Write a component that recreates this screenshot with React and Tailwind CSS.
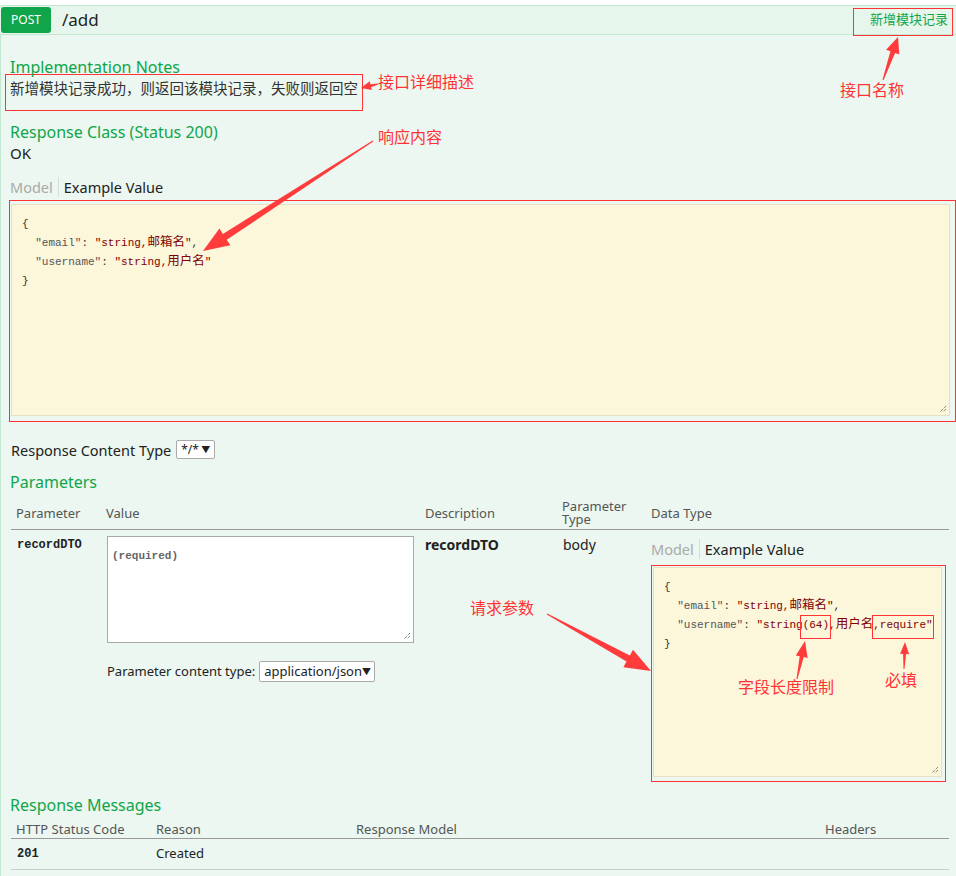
import React from 'react';

// tapered annotation arrow: thin tail, wide head
const arrowPoints = (x1, y1, x2, y2, headLen, headW, neckW, tailW = 1) => {
  const len = Math.hypot(x2 - x1, y2 - y1);
  const dx = (x2 - x1) / len;
  const dy = (y2 - y1) / len;
  const nx = -dy;
  const ny = dx;
  const bx = x2 - dx * headLen;
  const by = y2 - dy * headLen;
  const p = (x, y, w) => `${(x + nx * w).toFixed(1)},${(y + ny * w).toFixed(1)}`;
  return [
    p(x1, y1, tailW / 2),
    p(bx, by, neckW / 2),
    p(bx, by, headW / 2),
    `${x2},${y2}`,
    p(bx, by, -headW / 2),
    p(bx, by, -neckW / 2),
    p(x1, y1, -tailW / 2),
  ].join(' ');
};

const arrows = [
  [373, 141, 203, 251, 26, 20, 7],
  [547, 614, 651, 671, 26, 20, 7],
  [883, 80, 898, 37, 16, 14, 5],
  [378, 84, 361, 88, 10, 9, 3],
  [797, 679, 805, 641, 16, 12, 4],
  [904, 669, 905, 642, 12, 9, 3],
];

const ResizeGrip = () => (
  <svg className="absolute bottom-[2px] right-[2px]" width="9" height="9" viewBox="0 0 9 9">
    <path d="M8 2 L2 8 M8 5 L5 8" stroke="#555" strokeWidth="1" strokeDasharray="1 1" />
  </svg>
);

const Tabs = () => (
  <div className="flex h-[20px] items-center text-[14.5px] leading-[18px]">
    <span className="pr-[5px] text-[#aaa]">Model</span>
    <span className="h-[20px] w-px bg-[#d6dcd8]" />
    <span className="pl-[5px] text-[#222]">Example Value</span>
  </div>
);

const Key = ({ children }) => <span className="text-[#555]">{children}</span>;
const Str = ({ children }) => <span className="text-[#800000]">{children}</span>;
const Cjk = ({ children }) => <span className="text-[12.5px]">{children}</span>;

const Select = ({ children, className }) => (
  <div className={`flex items-center justify-between rounded-[2px] border border-[#aaa] bg-white px-[4px] ${className}`}>
    <span>{children}</span>
    <span className="text-[9px]">▼</span>
  </div>
);

export default function App() {
  return (
    <div className="relative h-[876px] w-[956px] overflow-hidden bg-white pt-[5px] text-[#222] font-['Noto_Sans','Noto_Sans_CJK_SC',sans-serif]">
      {/* header bar */}
      <div className="flex h-[30px] items-center border-y border-[#c3e8d1] bg-[#e7f6ec]">
        <div className="ml-px flex h-[26px] w-[50px] items-center justify-center rounded-[3px] bg-[#10a54a] text-[12px] text-white">
          POST
        </div>
        <div className="ml-[11px] text-[17px] leading-[20px]">/add</div>
        <div className="ml-auto mr-[8px] text-[13px] text-[#10a54a]">新增模块记录</div>
      </div>

      <div className="h-[841px] border-l border-[#c3e8d1] bg-[#ebf7f0] pl-[9px] pt-[23px]">
        <div className="h-[18px] text-[16px] leading-[18px] text-[#10a54a]">Implementation Notes</div>
        <div className="-ml-[5px] -mt-[2px] h-[37px] w-[358px] border border-[#ff3333] pl-[4px] pt-[5px] text-[14.5px] leading-[16px] text-[#333]">
          新增模块记录成功，则返回该模块记录，失败则返回空
        </div>

        <div className="mt-[12px] h-[18px] text-[16px] leading-[18px] text-[#10a54a]">Response Class (Status 200)</div>
        <div className="mt-[3px] text-[15px] leading-[18px]">OK</div>

        <div className="mt-[15px]">
          <Tabs />
        </div>

        <div className="-ml-px mt-[3px] h-[222px] w-[947px] border border-[#ff3333] pl-px pt-[3px]">
          <div className="relative h-[212px] w-[939px] border border-[#e6e0c4] bg-[#fcf6db] pl-[10px] pt-[10px]">
            <pre className="whitespace-pre text-[11px] leading-[19px] text-[#333] font-['Liberation_Mono','Noto_Sans_CJK_SC',monospace]">
              {'{\n  '}
              <Key>"email"</Key>: <Str>"string,<Cjk>邮箱名</Cjk>"</Str>,{'\n  '}
              <Key>"username"</Key>: <Str>"string,<Cjk>用户名</Cjk>"</Str>
              {'\n}'}
            </pre>
            <ResizeGrip />
          </div>
        </div>

        <div className="mt-[18px] flex h-[19px] items-center text-[14.5px] leading-[18px]">
          <span className="ml-px">Response Content Type</span>
          <Select className="ml-[5px] h-[19px] w-[39px] text-[12px]">*/*</Select>
        </div>

        <div className="mt-[14px] h-[18px] text-[16px] leading-[18px] text-[#10a54a]">Parameters</div>

        {/* parameters table */}
        <div className="ml-px mt-[6px] w-[938px]">
          <div className="flex h-[33px] items-center border-b border-[#999] text-[13px] leading-[13px] text-[#555]">
            <div className="w-[90px] pl-[5px]">Parameter</div>
            <div className="w-[319px] pl-[5px]">Value</div>
            <div className="w-[137px] pl-[5px]">Description</div>
            <div className="w-[89px] pl-[5px]">
              Parameter
              <br />
              Type
            </div>
            <div className="pl-[5px]">Data Type</div>
          </div>

          <div className="flex pt-[6px]">
            <div className="w-[90px] pl-[6px] pt-px text-[12px] font-bold leading-[16px] font-['Liberation_Mono',monospace]">recordDTO</div>
            <div className="w-[319px] pl-[6px]">
              <div className="relative h-[107px] w-[307px] border border-[#aaa] bg-white pl-[4px] pt-[4px]">
                <span className="text-[11px] font-bold leading-[14px] text-[#666] font-['Liberation_Mono',monospace]">(required)</span>
                <ResizeGrip />
              </div>
              <div className="mt-[18px] flex h-[21px] items-center text-[13px]">
                <span>Parameter content type:</span>
                <Select className="ml-[4px] h-[21px] w-[116px] text-[13px]">application/json</Select>
              </div>
            </div>
            <div className="w-[137px] pl-[5px] text-[14px] font-bold leading-[18px]">recordDTO</div>
            <div className="w-[89px] pl-[6px] text-[14px] leading-[18px]">body</div>
            <div className="pl-[5px] pt-[3px]">
              <Tabs />
              <div className="mt-[6px] h-[217px] w-[295px] border border-[#ff3333] pl-px pt-px">
                <div className="relative h-[210px] w-[289px] border border-[#e6e0c4] bg-[#fcf6db] pl-[10px] pt-[10px]">
                  <pre className="whitespace-pre text-[11px] leading-[19px] text-[#333] font-['Liberation_Mono','Noto_Sans_CJK_SC',monospace]">
                    {'{\n  '}
                    <Key>"email"</Key>: <Str>"string,<Cjk>邮箱名</Cjk>"</Str>,{'\n  '}
                    <Key>"username"</Key>:{' '}
                    <Str>
                      "string
                      <span className="relative">
                        (64)
                        <span className="absolute -bottom-[8px] -left-[3px] -right-[2px] -top-[4px] border border-[#ff3333]" />
                      </span>
                      ,<Cjk>用户名</Cjk>
                      <span className="relative">
                        ,require"
                        <span className="absolute -bottom-[8px] -left-px -right-px -top-[4px] border border-[#ff3333]" />
                      </span>
                    </Str>
                    {'\n}'}
                  </pre>
                  <ResizeGrip />
                </div>
              </div>
            </div>
          </div>
        </div>

        <div className="mt-[14px] h-[18px] text-[16px] leading-[18px] text-[#10a54a]">Response Messages</div>

        <div className="ml-px mt-[5px] w-[938px] text-[13px]">
          <div className="flex h-[20px] items-center border-b border-[#999] leading-[16px] text-[#555]">
            <div className="w-[140px] pl-[5px]">HTTP Status Code</div>
            <div className="w-[200px] pl-[5px]">Reason</div>
            <div className="w-[469px] pl-[5px]">Response Model</div>
            <div className="pl-[5px]">Headers</div>
          </div>
          <div className="flex h-[31px] items-center border-b border-[#ccc]">
            <div className="w-[140px] pl-[6px] text-[12px] font-bold font-['Liberation_Mono',monospace]">201</div>
            <div className="w-[200px] pl-[5px]">Created</div>
          </div>
        </div>
      </div>

      {/* annotations */}
      <div className="absolute left-[853px] top-[8px] h-[28px] w-[100px] border border-[#ff3333]" />
      <div className="absolute left-[378px] top-[74px] text-[16px] leading-[16px] text-[#ff3333]">接口详细描述</div>
      <div className="absolute left-[840px] top-[82px] text-[16px] leading-[16px] text-[#ff3333]">接口名称</div>
      <div className="absolute left-[378px] top-[129px] text-[16px] leading-[16px] text-[#ff3333]">响应内容</div>
      <div className="absolute left-[470px] top-[600px] text-[16px] leading-[16px] text-[#ff3333]">请求参数</div>
      <div className="absolute left-[738px] top-[679px] text-[16px] leading-[16px] text-[#ff3333]">字段长度限制</div>
      <div className="absolute left-[885px] top-[672px] text-[16px] leading-[16px] text-[#ff3333]">必填</div>

      <svg className="pointer-events-none absolute left-0 top-0" width="956" height="876">
        {arrows.map((a, i) => (
          <polygon key={i} points={arrowPoints(...a)} fill="#ff3b3b" />
        ))}
      </svg>
    </div>
  );
}
